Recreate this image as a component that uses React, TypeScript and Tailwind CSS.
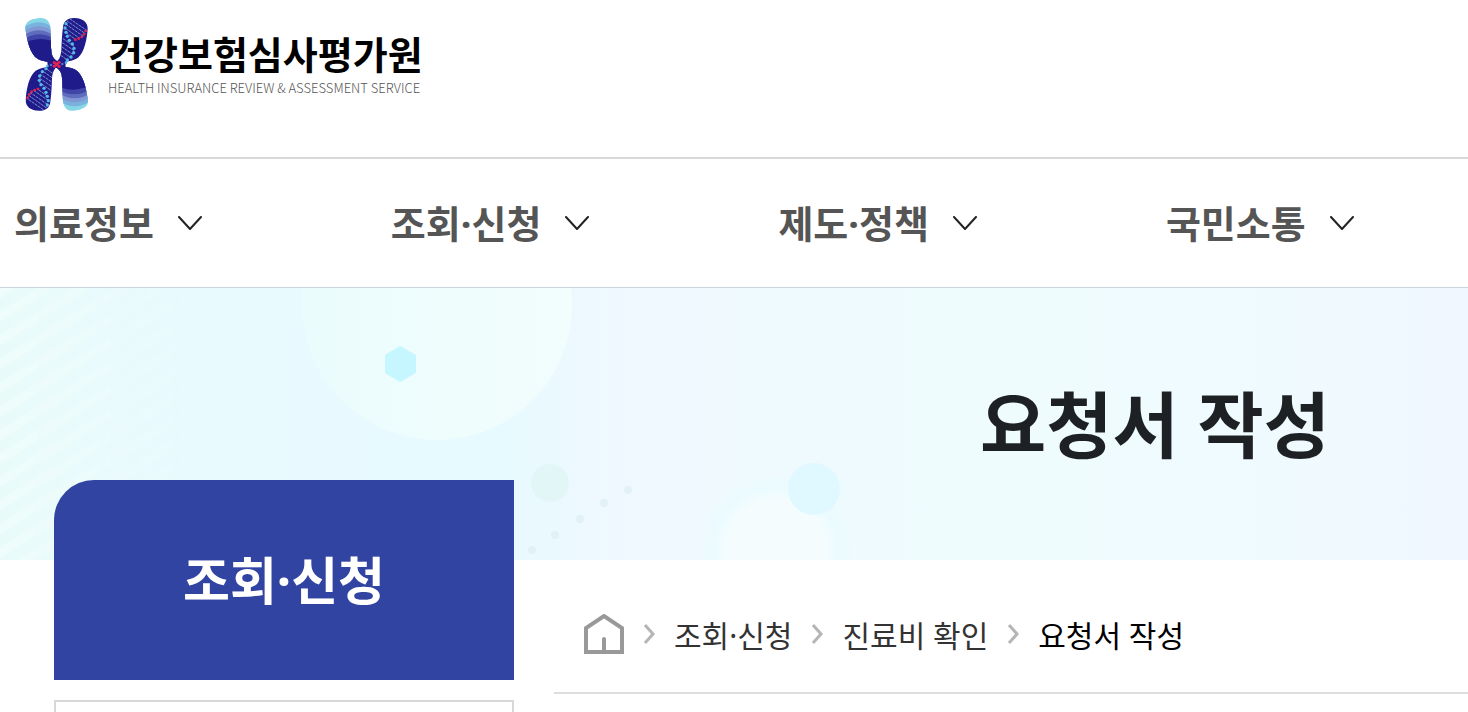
import React, { JSX } from 'react'

const MENUS = ['의료정보', '조회·신청', '제도·정책', '국민소통']

const TRAIL = ['조회·신청', '진료비 확인', '요청서 작성']

const HELIX_DOTS = [
  [168, 56],
  [165, 69],
  [168, 82],
  [172, 94],
  [178, 106],
  [187, 117],
  [192, 130],
  [191, 143],
  [183, 156],
  [172, 165],
]

const RED_DOTS = [
  [196, 104],
  [206, 101],
  [215, 96],
  [222, 88],
  [227, 78],
]

const BANNER_DOTS = [
  [532, 262],
  [555, 247],
  [580, 231],
  [604, 215],
  [628, 202],
]

function PlainArm(): JSX.Element {
  return (
    <g clipPath="url(#plain-arm)">
      <rect x="40" y="30" width="110" height="160" fill="#86d6e6" />
      <ellipse cx="86" cy="113" rx="66" ry="61" fill="#79b2de" />
      <ellipse cx="86" cy="125" rx="66" ry="61" fill="#8298d2" />
      <ellipse cx="86" cy="137" rx="68" ry="61" fill="#5f6cbd" />
      <ellipse cx="88" cy="149" rx="72" ry="61" fill="#4046a8" />
      <ellipse cx="92" cy="164" rx="80" ry="62" fill="#201b8b" />
    </g>
  )
}

function HelixArm(): JSX.Element {
  return (
    <g clipPath="url(#helix-arm)">
      <rect x="130" y="30" width="110" height="160" fill="#201b8b" />
      <g stroke="#8fa3d8" strokeWidth="2.5" strokeDasharray="9 2">
        <path d="M180 42 L230 76" />
        <path d="M170 47 L226 86" />
        <path d="M168 58 L220 94" />
        <path d="M166 70 L211 101" />
        <path d="M168 83 L199 105" />
        <path d="M159 101 L192 124" />
        <path d="M157 113 L192 137" />
        <path d="M156 126 L190 149" />
        <path d="M154 138 L182 158" />
        <path d="M152 151 L172 165" />
      </g>
      {HELIX_DOTS.map(([x, y]) => (
        <circle key={y} cx={x} cy={y} r="5" fill="#55b9e6" />
      ))}
      {RED_DOTS.map(([x, y]) => (
        <circle key={y} cx={x} cy={y} r="4" fill="#e3224f" />
      ))}
    </g>
  )
}

function LogoMark(): JSX.Element {
  return (
    <svg
      viewBox="42 33 192 285"
      className="h-[95px] w-16 shrink-0"
      aria-hidden="true"
    >
      <defs>
        <clipPath id="plain-arm">
          <path d="M46 72 C42 48 70 40 90 39 C108 38 118 47 121 66 C124 96 121 124 125 146 C128 158 134 164 144 170 L140 180 C122 168 101 172 84 162 C58 146 52 105 46 72Z" />
        </clipPath>
        <clipPath id="helix-arm">
          <path d="M159 66 C161 46 176 38 194 39 C216 40 234 50 233 72 C231 100 224 142 204 158 C186 171 168 166 140 180 L137 172 C149 164 153 150 154 134 C155 110 156 88 159 66Z" />
        </clipPath>
      </defs>
      <PlainArm />
      <HelixArm />
      {/* the lower half is the upper half turned round the centre */}
      <g transform="rotate(180 140 178)">
        <PlainArm />
        <HelixArm />
      </g>
      <path d="M112 170 L168 168 L166 187 L114 188Z" fill="#201b8b" />
      <circle cx="112" cy="183" r="4" fill="#55b9e6" />
      <circle cx="123" cy="180" r="4" fill="#4b6fce" />
      <circle cx="157" cy="177" r="4" fill="#4b6fce" />
      <circle cx="168" cy="173" r="4" fill="#55b9e6" />
      <circle cx="133" cy="173" r="5" fill="#e3224f" />
      <circle cx="140" cy="178" r="6" fill="#e3224f" />
      <circle cx="147" cy="184" r="5" fill="#e3224f" />
      <circle cx="133" cy="184" r="5" fill="#e3224f" />
      <circle cx="147" cy="172" r="5" fill="#e3224f" />
    </svg>
  )
}

function BannerArt(): JSX.Element {
  return (
    <svg className="absolute inset-0 h-full w-full" aria-hidden="true">
      <defs>
        <linearGradient id="sky" x1="0" x2="1" y1="0" y2="0">
          <stop offset="0" stopColor="#e9fbf9" />
          <stop offset="0.12" stopColor="#e9faff" />
          <stop offset="0.34" stopColor="#e7faff" />
          <stop offset="0.42" stopColor="#eff8ff" />
          <stop offset="0.56" stopColor="#eefafe" />
          <stop offset="0.66" stopColor="#effcfd" />
          <stop offset="0.84" stopColor="#effbfe" />
          <stop offset="1" stopColor="#f0f7ff" />
        </linearGradient>
        <linearGradient id="bubble" x1="0" x2="1" y1="0" y2="0">
          <stop offset="0" stopColor="#ebfcfc" />
          <stop offset="1" stopColor="#f2fdfd" />
        </linearGradient>
        <radialGradient id="halo">
          <stop offset="0.75" stopColor="#e9fbff" />
          <stop offset="1" stopColor="#e9fbff" stopOpacity="0" />
        </radialGradient>
        <radialGradient id="glow">
          <stop offset="0.8" stopColor="#f5fcfe" />
          <stop offset="1" stopColor="#f0fcfe" stopOpacity="0.4" />
        </radialGradient>
        <linearGradient id="stripe-fade" x1="0" x2="1" y1="0" y2="0">
          <stop offset="0" stopColor="#bbb" />
          <stop offset="1" stopColor="#000" />
        </linearGradient>
        <pattern
          id="stripes"
          width="20"
          height="20"
          patternUnits="userSpaceOnUse"
          patternTransform="rotate(-32)"
        >
          <rect width="20" height="9" fill="#f0fdfb" />
        </pattern>
        <mask id="stripe-mask">
          <rect width="210" height="272" fill="url(#stripe-fade)" />
        </mask>
      </defs>
      <rect width="100%" height="100%" fill="url(#sky)" />
      <rect
        width="210"
        height="272"
        fill="url(#stripes)"
        mask="url(#stripe-mask)"
      />
      <circle cx="437" cy="17" r="135" fill="url(#bubble)" />
      <path d="M400 58 L416 67 V85 L400 94 L385 85 V67Z" fill="#c6f6ff" />
      <circle cx="550" cy="195" r="19" fill="#e2f6f7" />
      {BANNER_DOTS.map(([x, y]) => (
        <circle key={x} cx={x} cy={y} r="4" fill="#e2f1f6" />
      ))}
      <circle cx="776" cy="262" r="78" fill="url(#halo)" />
      <circle cx="776" cy="262" r="62" fill="url(#glow)" />
      <circle cx="814" cy="201" r="26" fill="#e0f8ff" />
    </svg>
  )
}

function ChevronDown(): JSX.Element {
  return (
    <svg
      viewBox="0 0 24 14"
      className="h-3.5 w-6"
      fill="none"
      stroke="#222"
      strokeWidth="2"
      strokeLinecap="round"
      strokeLinejoin="round"
      aria-hidden="true"
    >
      <path d="M1 1 L12 13 L23 1" />
    </svg>
  )
}

function Separator(): JSX.Element {
  return (
    <svg
      viewBox="0 0 12 20"
      className="h-5 w-3"
      fill="none"
      stroke="#b5b5b5"
      strokeWidth="3"
      aria-hidden="true"
    >
      <path d="M2 1 L10 10 L2 19" />
    </svg>
  )
}

function HomeIcon(): JSX.Element {
  return (
    <svg
      viewBox="0 0 40 40"
      className="size-10"
      fill="none"
      stroke="#999"
      strokeWidth="4"
      aria-hidden="true"
    >
      <path d="M2 38 V14 L20 2 L38 14 V38Z" />
      <path d="M20 25 V38" strokeLinecap="round" />
    </svg>
  )
}

export default function App(): JSX.Element {
  return (
    <div className="flex min-h-screen flex-col overflow-x-hidden bg-white font-['Noto_Sans','Noto_Sans_CJK_KR',sans-serif]">
      <header>
        <div className="flex h-[157px] items-start px-6 pt-4">
          <a href="#" className="flex gap-5">
            <LogoMark />
            <span className="flex flex-col pt-4">
              <span className="text-[38px] leading-[44px] font-bold whitespace-nowrap text-black">
                건강보험심사평가원
              </span>
              <span className="font-['Noto_Sans_CJK_KR',sans-serif] text-[13px] leading-6 font-light whitespace-nowrap text-[#555]">
                HEALTH INSURANCE REVIEW &amp; ASSESSMENT SERVICE
              </span>
            </span>
          </a>
        </div>
        <nav className="flex h-[131px] items-center gap-[189px] border-t-2 border-b border-t-[#d8d8d8] border-b-[#cbd5da] px-3.5">
          {MENUS.map((menu) => (
            <button
              key={menu}
              type="button"
              className="flex shrink-0 items-center gap-6 text-[38px] leading-[44px] font-bold text-[#555]"
            >
              {menu}
              <ChevronDown />
            </button>
          ))}
        </nav>
      </header>

      <div className="relative flex h-[272px] items-center justify-end pr-[138px]">
        <BannerArt />
        <h1 className="relative text-[72px] leading-[80px] font-bold text-[#1e2124]">
          요청서 작성
        </h1>
      </div>

      <div className="flex grow gap-10 pl-[54px]">
        <aside className="relative -mt-20 flex w-[460px] shrink-0 flex-col gap-5">
          <h2 className="flex h-[200px] items-center justify-center rounded-tl-[40px] bg-[#3244a2] text-[51px] font-bold text-white">
            조회·신청
          </h2>
          <div className="min-h-3 grow border-2 border-b-0 border-[#d8d8d8]" />
        </aside>
        <main className="grow">
          <nav
            aria-label="현재 위치"
            className="flex h-[134px] items-center gap-[19px] border-b-2 border-[#ddd] px-[30px] pt-4"
          >
            <a href="#" aria-label="홈">
              <HomeIcon />
            </a>
            {TRAIL.map((item, i) => (
              <React.Fragment key={item}>
                <Separator />
                <a
                  href="#"
                  className={
                    i === TRAIL.length - 1
                      ? 'pt-1 text-[30px] leading-10 whitespace-nowrap text-black'
                      : 'pt-1 text-[30px] leading-10 whitespace-nowrap text-[#333]'
                  }
                >
                  {item}
                </a>
              </React.Fragment>
            ))}
          </nav>
        </main>
      </div>
    </div>
  )
}
